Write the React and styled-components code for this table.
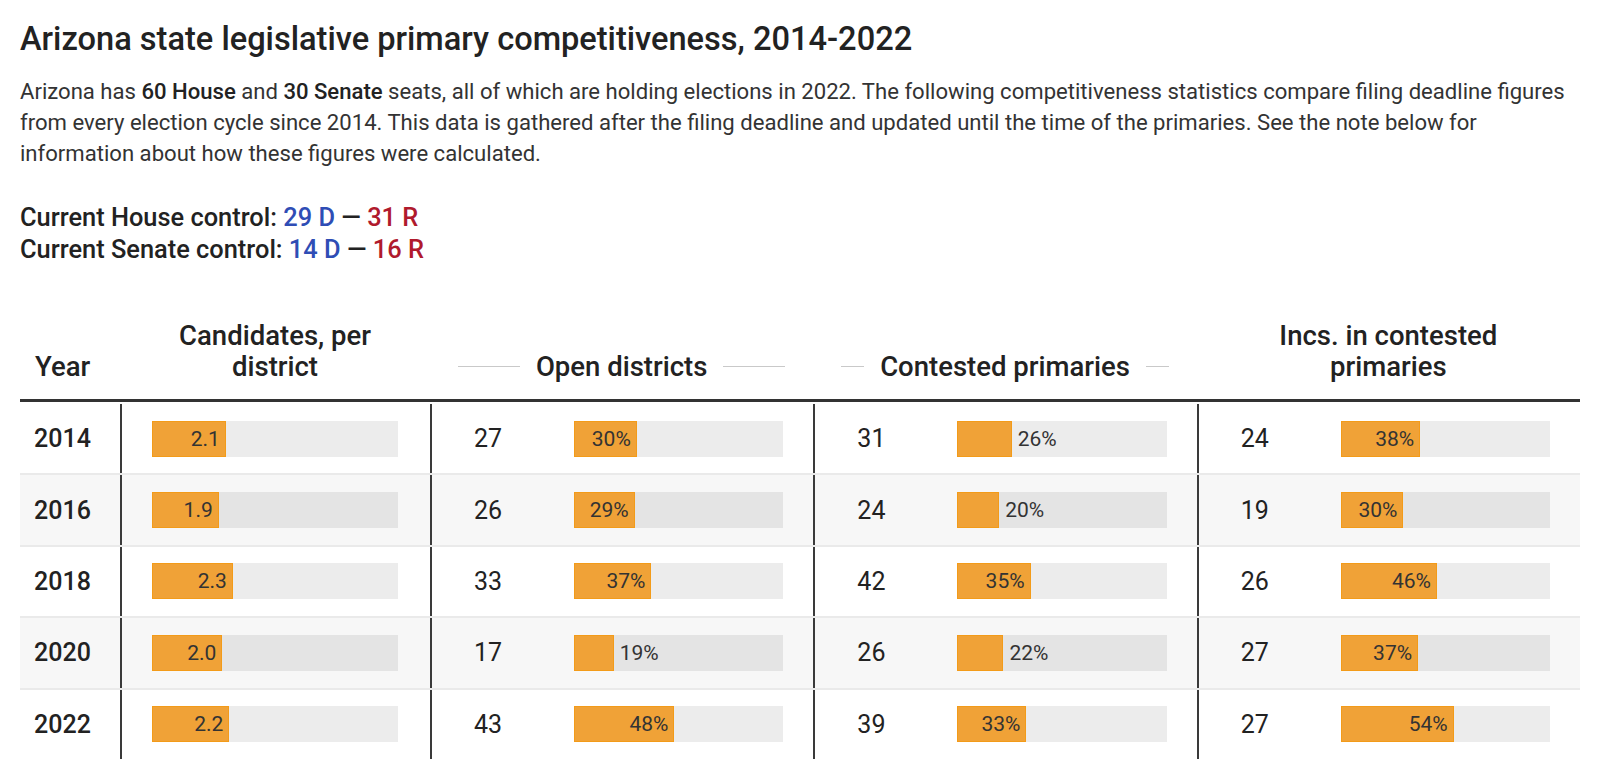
import React from 'react';
import styled, { createGlobalStyle } from 'styled-components';

const COLS = '100px 310px 1fr 1fr 1fr';
const CAND_MAX = 7;

const rows = [
  { year: 2014, cand: 2.1, open: [27, 30], contested: [31, 26], incs: [24, 38] },
  { year: 2016, cand: 1.9, open: [26, 29], contested: [24, 20], incs: [19, 30] },
  { year: 2018, cand: 2.3, open: [33, 37], contested: [42, 35], incs: [26, 46] },
  { year: 2020, cand: 2.0, open: [17, 19], contested: [26, 22], incs: [27, 37] },
  { year: 2022, cand: 2.2, open: [43, 48], contested: [39, 33], incs: [27, 54] },
];

const GlobalStyle = createGlobalStyle`
  * { box-sizing: border-box; }
  body {
    margin: 0;
    background: #fff;
    font-family: Roboto, "Liberation Sans", sans-serif;
    color: #222;
  }
`;

const Bar = ({ fraction, label }) => {
  const inside = fraction >= 0.265;
  return (
    <STrack>
      <SFill style={{ width: `${fraction * 100}%` }}>{inside && label}</SFill>
      {!inside && <SOutLabel>{label}</SOutLabel>}
    </STrack>
  );
};

const CountCell = ({ value }) => (
  <SCountCell>
    <SCount>{value[0]}</SCount>
    <Bar fraction={value[1] / 100} label={`${value[1]}%`} />
  </SCountCell>
);

const App = () => {
  return (
    <SPage>
      <GlobalStyle />
      <STitle>Arizona state legislative primary competitiveness, 2014-2022</STitle>
      <SIntro>
        Arizona has <b>60 House</b> and <b>30 Senate</b> seats, all of which are holding elections in 2022. The
        following competitiveness statistics compare filing deadline figures from every election cycle since
        2014. This data is gathered after the filing deadline and updated until the time of the primaries. See
        the note below for information about how these figures were calculated.
      </SIntro>
      <SControl>
        <div>
          Current House control: <SParty $party="d">29 D</SParty> — <SParty $party="r">31 R</SParty>
        </div>
        <div>
          Current Senate control: <SParty $party="d">14 D</SParty> — <SParty $party="r">16 R</SParty>
        </div>
      </SControl>

      <STable>
        <SHeadRow>
          <SHead $align="left">Year</SHead>
          <SHead>Candidates, per<br />district</SHead>
          <SHead>
            <SRuled>
              <SRule />
              <span>Open districts</span>
              <SRule />
            </SRuled>
          </SHead>
          <SHead>
            <SRuled>
              <SRule />
              <span>Contested primaries</span>
              <SRule />
            </SRuled>
          </SHead>
          <SHead>Incs. in contested<br />primaries</SHead>
        </SHeadRow>
        {rows.map((r, i) => (
          <SRow key={r.year} $shaded={i % 2 === 1} $first={i === 0}>
            <SYear>{r.year}</SYear>
            <SCandCell>
              <Bar fraction={r.cand / CAND_MAX} label={r.cand.toFixed(1)} />
            </SCandCell>
            <CountCell value={r.open} />
            <CountCell value={r.contested} />
            <CountCell value={r.incs} />
          </SRow>
        ))}
      </STable>
    </SPage>
  );
};

const SPage = styled.div`
  width: 1600px;
  padding: 20px 20px 20px;
`;

const STitle = styled.h1`
  margin: 0;
  font-size: 32.6px;
  line-height: 38px;
  font-weight: 500;
  color: #222;
`;

const SIntro = styled.p`
  margin: 18px 0 0;
  font-size: 22.1px;
  line-height: 31px;
  color: #333;

  b {
    font-weight: 500;
    color: #222;
  }
`;

const SControl = styled.div`
  margin-top: 32px;
  font-size: 25.4px;
  line-height: 32px;
  font-weight: 500;
  color: #222;
`;

const SParty = styled.span`
  color: ${({ $party }) => ($party === 'd' ? '#2f4db5' : '#b01a2d')};
`;

const STable = styled.div`
  margin-top: 55px;
  width: 1560px;
`;

const SHeadRow = styled.div`
  display: grid;
  grid-template-columns: ${COLS};
  align-items: end;
  border-bottom: 3px solid #333;
  padding-bottom: 17px;
`;

const SHead = styled.div`
  font-size: 27.5px;
  line-height: 31px;
  font-weight: 500;
  color: #222;
  white-space: nowrap;
  text-align: ${({ $align }) => $align || 'center'};
  padding: ${({ $align }) => ($align ? '0 0 0 15px' : '0 28px')};
`;

const SRuled = styled.div`
  display: flex;
  align-items: center;
  gap: 16px;
`;

const SRule = styled.span`
  flex: 1;
  height: 1px;
  background: #c9c9c9;
`;

const SRow = styled.div`
  display: grid;
  grid-template-columns: ${COLS};
  height: 71.4px;
  background: ${({ $shaded }) => ($shaded ? '#f7f7f7' : '#fff')};
  border-top: 2px solid ${({ $first }) => ($first ? 'transparent' : '#eaeaea')};

  & > * + * {
    border-left: 2px solid #3a3a3a;
  }
`;

const SYear = styled.div`
  display: flex;
  align-items: center;
  padding-left: 14px;
  font-size: 25px;
  font-weight: 500;
  color: #222;
`;

const SCandCell = styled.div`
  display: flex;
  align-items: center;
  padding: 0 32px 0 30px;
`;

const SCountCell = styled.div`
  display: flex;
  align-items: center;
  padding: 0 30px 0 42px;
`;

const SCount = styled.div`
  width: 100px;
  font-size: 25px;
  color: #222;
`;

const STrack = styled.div`
  flex: 1;
  display: flex;
  height: 36px;
  background: rgba(0, 0, 0, 0.075);
`;

const SFill = styled.div`
  display: flex;
  align-items: center;
  justify-content: flex-end;
  padding-right: 5px;
  background: #f0a237;
  border: 1px solid #f39b19;
  font-size: 21px;
  color: #333;
`;

const SOutLabel = styled.div`
  align-self: center;
  margin-left: 6px;
  font-size: 21px;
  color: #333;
`;

export default App;
